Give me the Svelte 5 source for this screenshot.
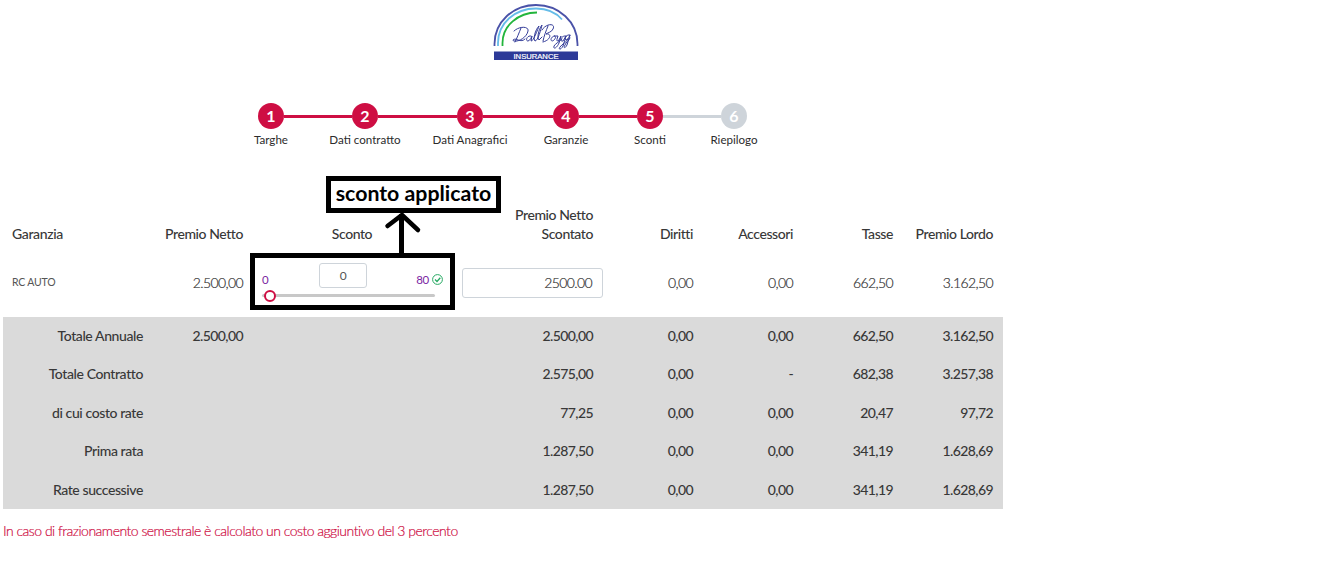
<script>
  const steps = [
    { label: 'Targhe', line: 68 },
    { label: 'Dati contratto', line: 79 },
    { label: 'Dati Anagrafici', line: 70 },
    { label: 'Garanzie', line: 58 },
    { label: 'Sconti', line: 58 },
    { label: 'Riepilogo', line: 0 },
  ];
  const current = 5;
  const totals = [
    ['Totale Annuale', '2.500,00', '', '2.500,00', '0,00', '0,00', '662,50', '3.162,50'],
    ['Totale Contratto', '', '', '2.575,00', '0,00', '-', '682,38', '3.257,38'],
    ['di cui costo rate', '', '', '77,25', '0,00', '0,00', '20,47', '97,72'],
    ['Prima rata', '', '', '1.287,50', '0,00', '0,00', '341,19', '1.628,69'],
    ['Rate successive', '', '', '1.287,50', '0,00', '0,00', '341,19', '1.628,69'],
  ];
</script>

<main>
  <header>
    <svg class="logo" width="86" height="58" viewBox="0 0 86 58" fill="none">
      <path d="M1.5 42V40C1.5 18 20 1 43 1s41.500 17 41.500 39v2" stroke="#4a52a8" stroke-width="1.800" />
      <path d="M5 42V39C5 19 22 4.500 43 4.500c11 0 20 4 26 11" stroke="#65bce8" stroke-width="1.800" />
      <path d="M9.500 42V39C9.500 22 25 8.500 44 8.500" stroke="#22b53c" stroke-width="1.800" />
      <g stroke="#343d99" stroke-width="1" stroke-linecap="round" stroke-linejoin="round">
        <path d="M28 24c-2 5-4 10-6 14M21 27c5-5 15-5 14 0-1 6-9 11-14 10-3-1 1-3 4-1 3 1 5 1 7-1" />
        <path d="M38 32c-4-1-6 5-3 5 2 0 4-5 4-5l-1 5c2 1 7-12 8-15-4 4-6 13-4 15 3 0 6-12 7-16-4 5-5 14-3 15l3-3" />
        <path d="M55 22c-2 5-4 10-5 15M49 26c4-7 14-7 11-1-1 3-6 4-7 5 6-1 5 6-3 8" />
        <path d="M61 32c-5 2-3 7 0 4 2-2 2-4 0-4l4 0c-2 5-1 6 1 4l2-4-2 7c-2 5-6 7-5 3 1-2 6-5 8-7M73 32c-5-1-7 6-3 5l3-5-3 10c-2 4-5 4-3 1 2-3 7-5 8-8M77 31c-4-1-6 4-4 5 2 0 4-5 4-5l-3 10c-2 4-4 3-2 0 1-3 4-4 5-7" />
      </g>
      <rect x="1" y="47.500" width="84" height="8.500" fill="#2d3a98" />
      <text x="43" y="54.500" text-anchor="middle" textLength="45" lengthAdjust="spacingAndGlyphs">INSURANCE</text>
    </svg>
  </header>

  <nav>
    {#each steps as step, i}
      <div class="step" class:pending={i >= current}>
        <span class="dot">{i + 1}</span>
        <span class="label">{step.label}</span>
      </div>
      {#if step.line}
        <span class="line" class:pending={i + 1 >= current} style="width: {step.line}px"></span>
      {/if}
    {/each}
  </nav>

  <section class="table">
    <div class="row head">
      <span class="left">Garanzia</span><span>Premio Netto</span><span class="center">Sconto</span>
      <span class="wrap">Premio Netto Scontato</span><span>Diritti</span><span>Accessori</span><span>Tasse</span><span>Premio Lordo</span>
    </div>
    <div class="row item">
      <span class="left name">RC AUTO</span>
      <span>2.500,00</span>
      <div class="discount">
        <div class="limits">
          <span class="limit">0</span>
          <span class="box value">0</span>
          <span class="limit max">80<svg width="11" height="11" viewBox="0 0 11 11" fill="none" stroke="#26a862"><circle cx="5.500" cy="5.500" r="4.900" /><path d="M3 5.500l2 2 3.300-3.800" stroke-width="1.300" /></svg></span>
        </div>
        <div class="slider"><i></i></div>
      </div>
      <div class="net"><span class="box">2500.00</span></div>
      <span>0,00</span><span>0,00</span><span>662,50</span><span>3.162,50</span>
    </div>
    {#each totals as row}
      <div class="row total">
        {#each row as cell, i}<span class:num={i > 0}>{cell}</span>{/each}
      </div>
    {/each}
  </section>
  <p>In caso di frazionamento semestrale è calcolato un costo aggiuntivo del 3 percento</p>

  <div class="note">sconto applicato</div>
  <svg class="arrow" width="40" height="46" viewBox="0 0 40 46" fill="none" stroke="#000" stroke-width="5">
    <path d="M17.500 46V4" /><path d="M3.500 16L18 5l16 15" stroke-width="4.500" stroke-linecap="round" />
  </svg>
  <div class="frame"></div>
</main>

<style>
  :global(body) { margin: 0; background: #fff; }
  main {
    position: relative; box-sizing: border-box; width: 1322px; height: 563px; overflow: hidden;
    font: 300 14px/19px Lato, sans-serif; color: #383838;
  }
  header { height: 103px; box-sizing: border-box; padding: 4px 0 0 493px; }
  .logo { display: block; }
  .logo text { font: 400 7px "Liberation Sans", sans-serif; fill: #fff; stroke: #fff; stroke-width: 0.200px; }

  nav { display: flex; padding-left: 258px; height: 92px; }
  .step { width: 26px; display: flex; flex-direction: column; align-items: center; }
  .dot {
    flex: none; width: 26px; height: 26px; border-radius: 50%; background: #ce0e43; color: #fff;
    font-size: 16px; font-weight: 700; line-height: 26px; text-align: center;
  }
  .label { white-space: nowrap; font-size: 11.600px; font-weight: 400; line-height: 16px; margin-top: 3px; color: #2c2c2c; }
  .line { height: 3px; margin-top: 12px; background: #ce0e43; }
  .pending .dot, .line.pending { background: #ced4da; }

  .table { width: 1000px; margin-left: 3px; }
  .row { display: grid; grid-template-columns: 150px 100px 200px 150px repeat(4, 100px); }
  .row > span { padding: 0 10px; text-align: right; }
  .row > .left { text-align: left; padding-left: 9px; }
  .row > .center { text-align: center; padding: 0 12px 0 10px; }
  .head { height: 53px; box-sizing: border-box; padding-bottom: 5px; align-items: end; font-weight: 500; letter-spacing: -0.420px; white-space: nowrap; }
  .head .left { letter-spacing: -0.360px; }
  .head .wrap { white-space: normal; padding-left: 55px; }
  .item { height: 69px; box-sizing: border-box; padding-bottom: 1px; align-items: center; letter-spacing: -0.600px; color: #333; -webkit-text-stroke: 0.200px; }
  .item .name { font-size: 10.500px; font-weight: 400; letter-spacing: -0.200px; color: #555; -webkit-text-stroke: 0; }
  .total { height: 38.400px; box-sizing: border-box; padding-bottom: 1.200px; align-items: center; background: #dadada; font-weight: 500; letter-spacing: -0.400px; }
  .num { letter-spacing: -0.600px; }
  .discount { padding: 0 9px; height: 48px; box-sizing: border-box; padding-top: 5px; -webkit-text-stroke: 0; }
  .box { display: block; box-sizing: border-box; border: 1px solid #ced4da; border-radius: 3px; }
  .limits { display: grid; grid-template-columns: 57px 48px 76px; height: 25px; letter-spacing: -0.300px; }
  .limit { font-size: 11.500px; line-height: 33px; color: #7b1fa2; font-weight: 400; }
  .max { display: flex; justify-content: flex-end; align-items: center; gap: 3px; height: 33px; }
  .value { height: 25px; text-align: center; line-height: 24px; font-size: 12px; font-weight: 400; color: #555; }
  .slider { display: flex; align-items: center; width: 173px; height: 3px; margin-top: 6px; background: #c8c8c8; border-radius: 2px; }
  .slider i { width: 8px; height: 8px; flex: none; margin-left: 2px; background: #fff; border: 2px solid #ce0e43; border-radius: 50%; }
  .net { padding: 2px 0 0 9px; }
  .net .box { width: 141px; height: 30px; line-height: 27px; padding-right: 10px; text-align: right; }
  p { margin: 12px 0 0 3px; color: #ce0e43; letter-spacing: -0.510px; -webkit-text-stroke: 0.200px; }

  .note {
    position: absolute; left: 326px; top: 176px; width: 175px; height: 37px; box-sizing: border-box;
    border: 5px solid #000; color: #000; text-align: center; white-space: nowrap;
    font-size: 21.300px; font-weight: 700; line-height: 24px;
  }
  .arrow { position: absolute; left: 384px; top: 210px; }
  .frame { position: absolute; left: 250px; top: 253px; width: 205px; height: 57px; box-sizing: border-box; border: 5px solid #000; }
</style>
